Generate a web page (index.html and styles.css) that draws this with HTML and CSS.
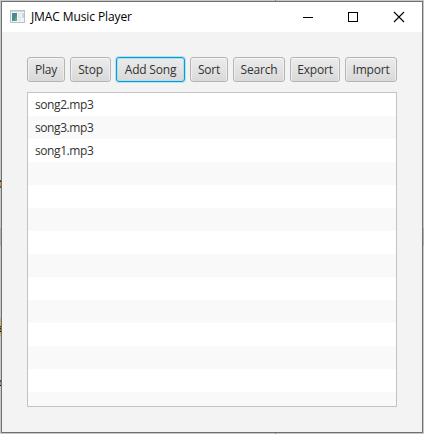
FILE: index.html
```html
<!DOCTYPE html>
<html lang="en">
<head>
<meta charset="utf-8">
<title>JMAC Music Player</title>
<link rel="stylesheet" href="styles.css">
</head>
<body>
<div class="desktop">
  <i class="speck top"></i><i class="speck bottom"></i><i class="speck right"></i>
  <i class="speck side-a"></i><i class="speck side-b"></i><i class="speck side-c"></i><i class="speck side-d"></i><i class="speck side-e"></i>
  <main class="window">
    <header class="titlebar">
      <svg class="app-icon" width="16" height="13" viewBox="0 0 16 13">
        <defs><linearGradient id="scene" x1="0" y1="0" x2="1" y2="1"><stop offset="0" stop-color="#5580ae"/><stop offset=".5" stop-color="#3f8f8f"/><stop offset="1" stop-color="#74b98c"/></linearGradient></defs>
        <rect x=".5" y=".5" width="14" height="12" fill="#f2f4f5" stroke="#bcc0c6"/>
        <path d="M1 1.5h13" stroke="#d3d6da"/>
        <rect x="2" y="3" width="5" height="8" fill="url(#scene)"/>
        <rect x="8" y="3" width="3" height="8" fill="#e6eaed"/>
        <rect x="12" y="3" width="2" height="5" fill="#c5dae2"/>
      </svg>
      <h1 class="title">JMAC Music Player</h1>
      <svg class="controls" width="102" height="12" viewBox="0 0 102 12" fill="none" stroke="#000">
        <path d="M0 6.5h10" shape-rendering="crispEdges"/>
        <rect x="45.5" y="1.5" width="9" height="9" shape-rendering="crispEdges"/>
        <path d="M91 1l10 10M101 1L91 11" stroke-width="1.1"/>
      </svg>
    </header>
    <nav class="toolbar">
      <button class="btn play">Play</button>
      <button class="btn stop">Stop</button>
      <button class="btn add focused">Add Song</button>
      <button class="btn sort">Sort</button>
      <button class="btn search">Search</button>
      <button class="btn export">Export</button>
      <button class="btn import">Import</button>
    </nav>
    <ul class="songs">
      <li>song2.mp3</li><li>song3.mp3</li><li>song1.mp3</li>
      <li></li><li></li><li></li><li></li><li></li><li></li><li></li><li></li><li></li><li></li><li></li>
    </ul>
  </main>
</div>
</body>
</html>
```
FILE: styles.css
```css
* { box-sizing: border-box; }
body { margin: 0; overflow: hidden; font-family: "Open Sans", "Noto Sans", sans-serif; }
.desktop { position: relative; width: 424px; height: 434px; padding: 1px; background: #c8c8c8; }
.window { width: 422px; height: 432px; border: 1px solid #707070; background: #f3f3f3; }
.titlebar { display: flex; align-items: center; height: 30px; padding-left: 8px; background: #fff; }
.app-icon { flex: none; margin-top: -1px; }
.title { width: 101px; margin: 0 0 0 5px; font-size: 12px; line-height: 16px; font-weight: 400; letter-spacing: -0.1px; white-space: nowrap; color: #000; }
.controls { flex: none; margin: -1px 0 0 171px; }
.toolbar { display: flex; gap: 5px; padding: 25px 0 0 25px; }
.btn { flex: none; height: 25px; padding: 1px 0 0; border: 1px solid #b5b5b5; border-radius: 3px; background: linear-gradient(#ececec, #d9d9d9); box-shadow: inset 0 1px #f6f6f6, inset 1px 0 #eee, inset -1px 0 #eee; font: 12px/22px "Open Sans", "Noto Sans", sans-serif; letter-spacing: -0.2px; color: #333; white-space: nowrap; }
.play { width: 38px; }
.stop { width: 41px; }
.add { width: 69px; }
.sort { width: 38px; }
.search { width: 52px; }
.export { width: 50px; }
.import { width: 52px; }
.focused { border-color: #039ed3; box-shadow: 0 0 0 1px #b5e1f0, inset 0 0 0 1px #b5dceb; }
.songs { width: 370px; height: 315px; margin: 10px 0 0 25px; padding: 0; border: 1px solid #c3c3c3; list-style: none; overflow: hidden; background: #fff; }
.songs li { height: 23px; padding-left: 7px; font-size: 12px; line-height: 23px; letter-spacing: -0.42px; color: #333; }
.songs li:nth-child(even) { background: #f9f9f9; }
.speck { position: absolute; }
.top, .bottom { left: 275px; width: 1px; background: #b77a80; }
.top { top: 0; height: 1px; }
.bottom { top: 433px; height: 1px; }
.right { left: 423px; top: 228px; width: 1px; height: 18px; background: #aab2bd; }
.side-a, .side-b, .side-c, .side-d, .side-e { left: 0; width: 1px; }
.side-a { top: 180px; height: 8px; background: linear-gradient(#276b9c 0 1px, #3b2b22 1px 2px, #dc9a35 2px 6px, #8a481f 6px 7px, #4779a0 7px); }
.side-b { top: 228px; height: 18px; background: #aab2bd; }
.side-c { top: 318px; height: 18px; background: #bdbb72; }
.side-d { top: 326px; height: 6px; background: linear-gradient(#203d27 0 1px, #829050 1px 2px, #382b20 2px 3px, #c2681d 3px 5px, #111 5px); }
.side-e { top: 380px; height: 6px; background: linear-gradient(#176590 0 2px, #e28b31 2px 5px, #111 5px); }
```
